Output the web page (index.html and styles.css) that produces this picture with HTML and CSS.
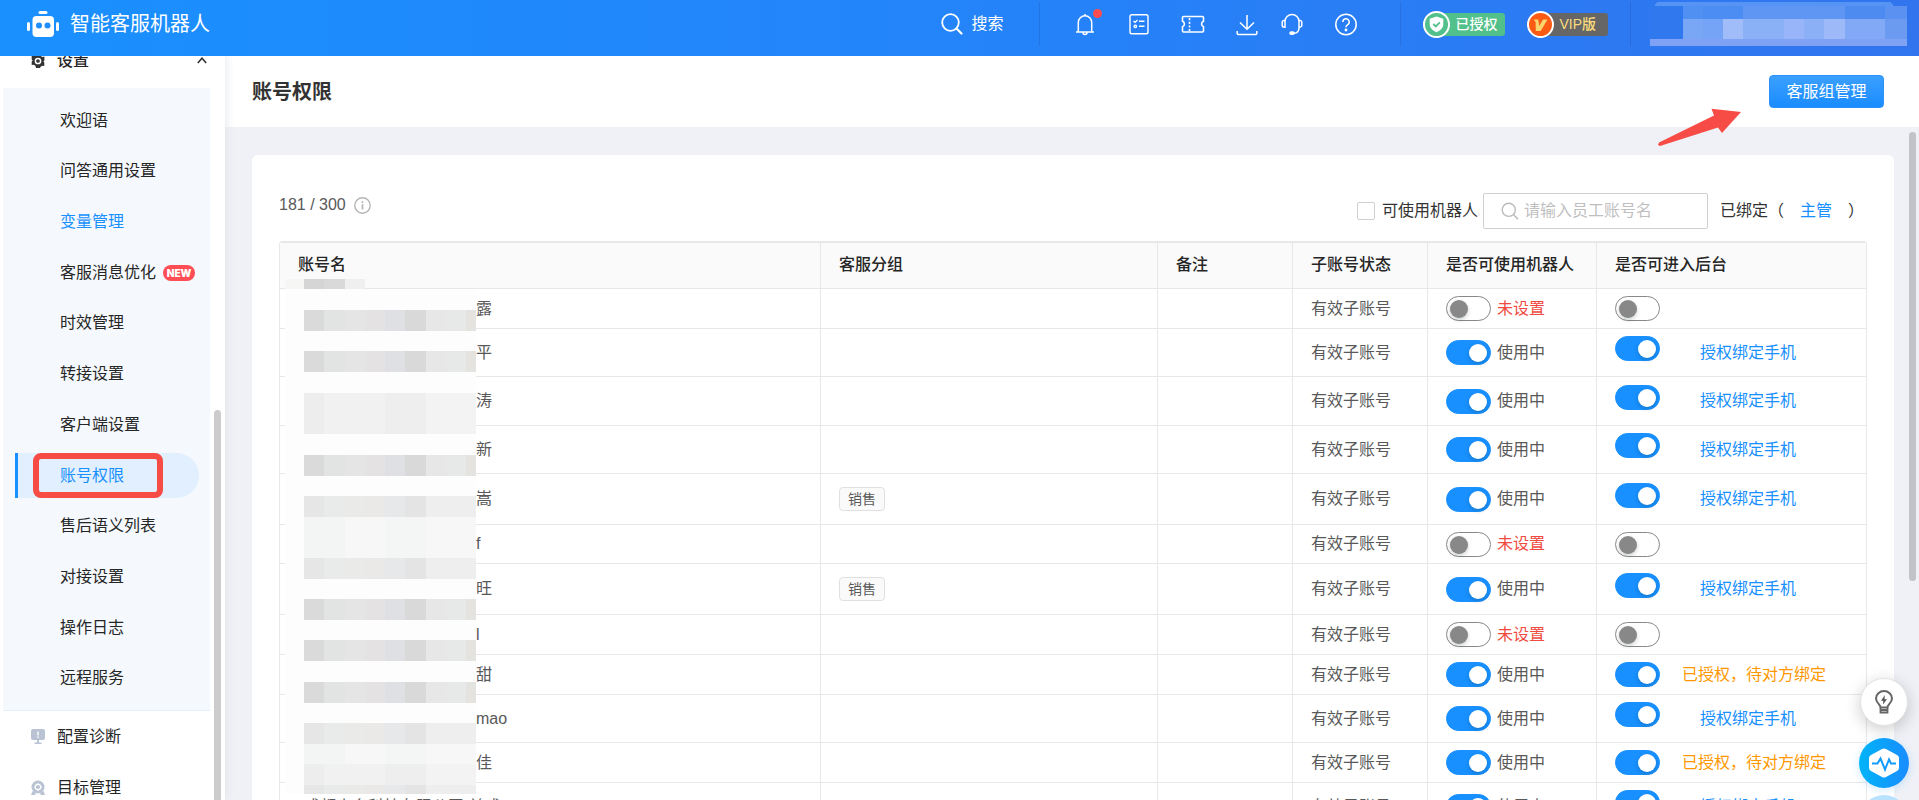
FILE: index.html
```html
<!DOCTYPE html>
<html lang="zh-CN">
<head>
<meta charset="utf-8">
<meta name="viewport" content="width=device-width, initial-scale=1">
<title>账号权限 - 智能客服机器人</title>
<link rel="stylesheet" href="styles.css">
</head>
<body>
<header class="topbar">
  <div class="brand">
    <svg width="32" height="26" viewBox="0 0 32 26" fill="#fff" aria-hidden="true"><rect x="11.500" y="0" width="9" height="3" rx="1.500"/><rect x="5.500" y="5" width="21.500" height="21" rx="4"/><rect x="0" y="11" width="3" height="9" rx="1.500"/><rect x="29" y="11" width="3" height="9" rx="1.500"/><circle cx="12" cy="14.500" r="3" fill="#1e8dff"/><circle cx="20.500" cy="14.500" r="3" fill="#1e8dff"/></svg>
    <span class="brand-name">智能客服机器人</span>
  </div>
  <button class="search" type="button">
    <svg width="22" height="22" viewBox="0 0 22 22" fill="none" stroke="#fff" stroke-width="1.800" aria-hidden="true"><circle cx="9.500" cy="9.500" r="8.300"/><path d="M15.500 15.500l5 5" stroke-width="2.200" stroke-linecap="round"/></svg>
    <span>搜索</span>
  </button>
  <div class="tools">
    <button class="tool" type="button" aria-label="通知">
      <svg width="24" height="24" viewBox="0 0 24 24" fill="none" stroke="#fff" stroke-width="1.500"><path d="M3 20h18M5.300 20v-9.500a6.700 6.700 0 0 1 13.400 0V20M12 3.800V2M10 20.500a2 2 0 0 0 4 0"/></svg>
      <i class="dot"></i>
    </button>
    <button class="tool" type="button" aria-label="任务">
      <svg width="24" height="24" viewBox="0 0 24 24" fill="none" stroke="#fff" stroke-width="1.400"><rect x="3" y="2.700" width="18" height="19" rx="1.800"/><path d="M6.500 9l1.500 1.400L10.500 8M12 9.300h5.500M12 14.300h5.500"/><circle cx="8.300" cy="14.300" r="1.200"/></svg>
    </button>
    <button class="tool tool-ticket" type="button" aria-label="卡券">
      <svg width="24" height="24" viewBox="0 0 24 24" fill="none" stroke="#fff" stroke-width="1.600"><path d="M1.500 5.500a1 1 0 0 1 1-1h19a1 1 0 0 1 1 1v3.700a3 3 0 0 0 0 5.600v4.200a1 1 0 0 1-1 1h-19a1 1 0 0 1-1-1v-4.200a3 3 0 0 0 0-5.600z"/><path d="M8.500 6v13" stroke-dasharray="2.200 1.500"/></svg>
    </button>
    <button class="tool" type="button" aria-label="下载">
      <svg width="24" height="24" viewBox="0 0 24 24" fill="none" stroke="#fff" stroke-width="1.500"><path d="M12 3v14M5 10.500l7 6.800 7-6.800M2.200 19v2.500a1 1 0 0 0 1 1h17.600a1 1 0 0 0 1-1V19"/></svg>
    </button>
    <button class="tool tool-headset" type="button" aria-label="客服">
      <svg width="24" height="24" viewBox="0 0 24 24" fill="none" stroke="#fff" stroke-width="1.500"><path d="M5 16V9.500a7 7 0 0 1 14 0V16c0 3-1.500 5-5 5.300"/><path d="M5 8.500H4A1.800 1.800 0 0 0 2.200 10.300v3A1.800 1.800 0 0 0 4 15.100h1M19 8.500h1a1.800 1.800 0 0 1 1.800 1.800v3a1.800 1.800 0 0 1-1.800 1.800h-1"/><rect x="10" y="20" width="4" height="2.200" rx="1.100" fill="#fff"/></svg>
    </button>
    <button class="tool" type="button" aria-label="帮助">
      <svg width="24" height="24" viewBox="0 0 24 24" fill="none" stroke="#fff" stroke-width="1.500"><circle cx="12" cy="12.500" r="10.200"/><path d="M8.800 10a3.200 3.200 0 1 1 4.700 2.800c-1 .600-1.500 1.100-1.500 2.400"/><circle cx="12" cy="18" r=".7" fill="#fff"/></svg>
    </button>
  </div>
  <div class="badges">
    <span class="badge badge-green">
      <svg width="27" height="27" viewBox="0 0 27 27" aria-hidden="true"><circle cx="13.500" cy="13.500" r="12.500" fill="#52c08a" stroke="#fff" stroke-width="2"/><path d="M13.500 5.500l6.800 2.200v5.800c0 3.500-3 6-6.800 7.700-3.800-1.700-6.800-4.200-6.800-7.700V7.700z" fill="#fff"/><path d="M10.300 13l2.500 2.400 4-4" fill="none" stroke="#52c08a" stroke-width="1.800"/></svg>
      <b>已授权</b>
    </span>
    <span class="badge badge-gray">
      <svg width="27" height="27" viewBox="0 0 27 27" aria-hidden="true"><circle cx="13.500" cy="13.500" r="12.500" fill="#fd5a14" stroke="#fff" stroke-width="2"/><path d="M6.500 8.500h4.800l.9 6.500 3.800-6.500h4.500l-6.800 11.500H8.800L8.600 11z" fill="#fbd46d"/></svg>
      <b>VIP版</b>
    </span>
  </div>
  <div class="account">
    <svg class="account-mask" viewBox="0 0 257 44" preserveAspectRatio="none" aria-hidden="true" shape-rendering="crispEdges">
      <path d="M5 4q0-4 5-4h228q5 0 5 4z" fill="#5593f4"/><path d="M12 4h20v33H12zM0 4h12v33H0z" fill="#3078ee"/>
      <path d="M33 4h20v13H33z" fill="#5090f3"/><path d="M53 4h40v13H53z" fill="#4b8df2"/><path d="M93 4h102v13H93z" fill="#5f96f3"/><path d="M195 4h40v13h-40z" fill="#4d8bf0"/><path d="M235 4h22v13h-22z" fill="#5b92f1"/>
      <path d="M33 17h20v20H33z" fill="#7aa6f6"/><path d="M53 17h20v20H53z" fill="#75a3f6"/><path d="M73 17h20v20H73z" fill="#a0bcf9"/><path d="M93 17h41v20H93z" fill="#8ab0f6"/><path d="M134 17h20v20h-20z" fill="#97b5f8"/><path d="M154 17h20v20h-20z" fill="#8cb0f5"/><path d="M174 17h21v20h-21z" fill="#9eb9f8"/><path d="M195 17h40v20h-40z" fill="#82a9f5"/><path d="M235 17h22v20h-22z" fill="#6b9bf1"/>
      <path d="M0 37h257v7H0z" fill="#80a2f4"/>
    </svg>
  </div>
</header>

<div class="shell">
  <nav class="sidebar" aria-label="主菜单">
    <a class="group group-open" href="#">
      <svg width="14" height="16" viewBox="0 0 14 16" aria-hidden="true"><path d="M5 1h4l.6 2 1.900 1 1.900-.5v4l-1 .9.900 1v3.600l-2-.3-1.700 1L9 15H5l-.6-2.300-1.700-1-2 .3V8.400l1-1-1-.9v-4l1.900.5 1.900-1z" fill="#333"/><circle cx="7" cy="8" r="2.600" fill="#333" stroke="#fff" stroke-width="1.500"/></svg>
      <span>设置</span>
      <svg class="chevron" width="10" height="7" viewBox="0 0 10 7" fill="none" stroke="#333" stroke-width="1.600" aria-hidden="true"><path d="M.8 6L5 1.300 9.200 6"/></svg>
    </a>
    <div class="submenu">
      <a class="item" href="#">欢迎语</a>
      <a class="item" href="#">问答通用设置</a>
      <a class="item item-blue" href="#">变量管理</a>
      <a class="item" href="#">客服消息优化<span class="new">NEW</span></a>
      <a class="item" href="#">时效管理</a>
      <a class="item" href="#">转接设置</a>
      <a class="item" href="#">客户端设置</a>
      <a class="item item-active" href="#" aria-current="page">账号权限<i class="marker"></i></a>
      <a class="item" href="#">售后语义列表</a>
      <a class="item" href="#">对接设置</a>
      <a class="item" href="#">操作日志</a>
      <a class="item" href="#">远程服务</a>
    </div>
    <a class="group" href="#">
      <svg width="14" height="15" viewBox="0 0 14 15" fill="#b9c3d3" aria-hidden="true"><rect width="14" height="11" rx="2"/><path d="M6 11h2v2.500h2.500V15h-7v-1.500H6z"/><path d="M6.300 2.500h1.400v4H6.300zM6.300 7.500h1.400v1.500H6.300z" fill="#fff"/></svg>
      <span>配置诊断</span>
    </a>
    <a class="group" href="#">
      <svg width="14" height="15" viewBox="0 0 14 15" aria-hidden="true"><circle cx="7" cy="7" r="6.500" fill="#b9c3d3"/><path d="M1.500 11L0 15h4l1-2M12.500 11L14 15h-4l-1-2" fill="#b9c3d3"/><circle cx="7" cy="7" r="2.700" fill="none" stroke="#fff" stroke-width="1.200"/><path d="M7 3v2M7 9v2M3 7h2M9 7h2" stroke="#fff"/></svg>
      <span>目标管理</span>
    </a>
    <i class="side-scroll"></i>
  </nav>

  <main class="main">
    <div class="page-head">
      <h1>账号权限</h1>
      <button class="primary" type="button">客服组管理</button>
      <svg class="arrow" width="84" height="38" viewBox="0 0 84 38" aria-hidden="true"><path d="M1 34.500L56 7.500 53.500.700 83 4 64 25 60 19.500 2 38 0 37z" fill="#f74b45"/></svg>
    </div>
    <div class="content">
      <section class="card">
        <div class="toolbar">
          <p class="count">181 / 300
            <svg width="17" height="17" viewBox="0 0 17 17" fill="none" stroke="#b5b5b5" stroke-width="1.400" aria-hidden="true"><circle cx="8.500" cy="8.500" r="7.700"/><path d="M8.500 7.300v5.200M8.500 4.300v1.600" stroke-width="1.700"/></svg>
          </p>
          <label class="check"><input type="checkbox">可使用机器人</label>
          <div class="field">
            <svg width="18" height="18" viewBox="0 0 18 18" fill="none" stroke="#bbb" stroke-width="1.400" aria-hidden="true"><circle cx="7.800" cy="7.800" r="6.600"/><path d="M12.500 12.500l4.500 4.700"/></svg>
            <input type="text" placeholder="请输入员工账号名" aria-label="员工账号名">
          </div>
          <span class="bound">已绑定（<a href="#">主管</a>）</span>
        </div>
        <div class="table-wrap">
          <table>
            <colgroup><col><col class="c-group"><col class="c-note"><col class="c-state"><col class="c-robot"><col class="c-admin"></colgroup>
            <thead>
              <tr><th>账号名</th><th>客服分组</th><th>备注</th><th>子账号状态</th><th>是否可使用机器人</th><th>是否可进入后台</th></tr>
            </thead>
            <tbody>
              <tr class="h40"><td class="name">露</td><td></td><td></td><td>有效子账号</td><td><label class="cell off"><input class="switch" type="checkbox" role="switch">未设置</label></td><td><div class="cell"><input class="switch" type="checkbox" role="switch" aria-label="进入后台"></div></td></tr>
              <tr class="h48"><td class="name">平</td><td></td><td></td><td>有效子账号</td><td><label class="cell"><input class="switch" type="checkbox" role="switch" checked>使用中</label></td><td><div class="cell auth"><input class="switch" type="checkbox" role="switch" checked aria-label="进入后台"><a href="#">授权绑定手机</a></div></td></tr>
              <tr class="h49"><td class="name">涛</td><td></td><td></td><td>有效子账号</td><td><label class="cell"><input class="switch" type="checkbox" role="switch" checked>使用中</label></td><td><div class="cell auth"><input class="switch" type="checkbox" role="switch" checked aria-label="进入后台"><a href="#">授权绑定手机</a></div></td></tr>
              <tr class="h48"><td class="name">新</td><td></td><td></td><td>有效子账号</td><td><label class="cell"><input class="switch" type="checkbox" role="switch" checked>使用中</label></td><td><div class="cell auth"><input class="switch" type="checkbox" role="switch" checked aria-label="进入后台"><a href="#">授权绑定手机</a></div></td></tr>
              <tr class="h51"><td class="name">嵩</td><td><span class="tag">销售</span></td><td></td><td>有效子账号</td><td><label class="cell"><input class="switch" type="checkbox" role="switch" checked>使用中</label></td><td><div class="cell auth"><input class="switch" type="checkbox" role="switch" checked aria-label="进入后台"><a href="#">授权绑定手机</a></div></td></tr>
              <tr class="h39"><td class="name">f</td><td></td><td></td><td>有效子账号</td><td><label class="cell off"><input class="switch" type="checkbox" role="switch">未设置</label></td><td><div class="cell"><input class="switch" type="checkbox" role="switch" aria-label="进入后台"></div></td></tr>
              <tr class="h51"><td class="name">旺</td><td><span class="tag">销售</span></td><td></td><td>有效子账号</td><td><label class="cell"><input class="switch" type="checkbox" role="switch" checked>使用中</label></td><td><div class="cell auth"><input class="switch" type="checkbox" role="switch" checked aria-label="进入后台"><a href="#">授权绑定手机</a></div></td></tr>
              <tr class="h40"><td class="name">l</td><td></td><td></td><td>有效子账号</td><td><label class="cell off"><input class="switch" type="checkbox" role="switch">未设置</label></td><td><div class="cell"><input class="switch" type="checkbox" role="switch" aria-label="进入后台"></div></td></tr>
              <tr class="h40"><td class="name">甜</td><td></td><td></td><td>有效子账号</td><td><label class="cell"><input class="switch" type="checkbox" role="switch" checked>使用中</label></td><td><div class="cell"><input class="switch" type="checkbox" role="switch" checked aria-label="进入后台"><span class="wait">已授权，待对方绑定</span></div></td></tr>
              <tr class="h48"><td class="name">mao</td><td></td><td></td><td>有效子账号</td><td><label class="cell"><input class="switch" type="checkbox" role="switch" checked>使用中</label></td><td><div class="cell auth"><input class="switch" type="checkbox" role="switch" checked aria-label="进入后台"><a href="#">授权绑定手机</a></div></td></tr>
              <tr class="h40"><td class="name">佳</td><td></td><td></td><td>有效子账号</td><td><label class="cell"><input class="switch" type="checkbox" role="switch" checked>使用中</label></td><td><div class="cell"><input class="switch" type="checkbox" role="switch" checked aria-label="进入后台"><span class="wait">已授权，待对方绑定</span></div></td></tr>
              <tr class="h48"><td class="name-full">成都小多科技有限公司:兰成</td><td></td><td></td><td>有效子账号</td><td><label class="cell"><input class="switch" type="checkbox" role="switch" checked>使用中</label></td><td><div class="cell auth"><input class="switch" type="checkbox" role="switch" checked aria-label="进入后台"><a href="#">授权绑定手机</a></div></td></tr>
            </tbody>
          </table>
          <svg class="name-mask" width="191" height="515" viewBox="0 0 191 515" aria-hidden="true" shape-rendering="crispEdges">
            <defs>
              <g id="dark"><path d="M19 0h20v21H19z" fill="#dadada"/><path d="M39 0h21v21H39z" fill="#e1e4e3"/><path d="M60 0h20v21H60z" fill="#e5e5e5"/><path d="M80 0h20v21H80z" fill="#e4e2e3"/><path d="M100 0h20v21h-20z" fill="#dfe0e3"/><path d="M120 0h21v21h-21z" fill="#d9d9d9"/><path d="M141 0h20v21h-20z" fill="#e7e7e7"/><path d="M161 0h20v21h-20z" fill="#e6e9e8"/><path d="M181 0h10v21h-10z" fill="#e4e3e0"/></g>
              <g id="mid"><path d="M19 0h20v21H19z" fill="#e6e6e6"/><path d="M39 0h21v21H39z" fill="#e9ebea"/><path d="M60 0h20v21H60z" fill="#eaeae8"/><path d="M80 0h20v21H80z" fill="#ebe9e8"/><path d="M100 0h20v21h-20z" fill="#e7e8e9"/><path d="M120 0h21v21h-21z" fill="#e4e4e4"/><path d="M141 0h50v21h-50z" fill="#eee"/></g>
              <g id="pale"><path d="M19 0h41v21H19z" fill="#f3f5f4"/><path d="M60 0h40v21H60z" fill="#f7f7f7"/><path d="M100 0h41v21h-41z" fill="#f4f5f5"/><path d="M141 0h50v21h-50z" fill="#f7f7f7"/></g>
              <g id="light"><path d="M19 0h20v21H19z" fill="#ededed"/><path d="M39 0h61v21H39z" fill="#f0f1f0"/><path d="M100 0h41v21h-41z" fill="#eee"/><path d="M141 0h50v21h-50z" fill="#f3f3f3"/></g>
            </defs>
            <path d="M0 10h191v505H0z" fill="#fdfdfd"/>
            <path d="M0 0h19v10H0z" fill="#f6f6f5"/><path d="M19 0h20v10H19z" fill="#d5d5d5"/><path d="M39 0h21v10H39z" fill="#d9d9d9"/><path d="M60 0h20v10H60z" fill="#efefef"/>
            <use href="#dark" y="31"/><use href="#dark" y="72"/><use href="#light" y="114"/><use href="#light" y="134"/><use href="#dark" y="176"/><use href="#mid" y="217"/><use href="#pale" y="238"/><use href="#pale" y="259"/><use href="#mid" y="279"/><use href="#dark" y="320"/><use href="#dark" y="361"/><use href="#dark" y="403"/><use href="#mid" y="444"/><use href="#pale" y="465"/><use href="#light" y="485"/><use href="#mid" y="506"/>
          </svg>
        </div>
      </section>
      <i class="page-scroll"></i>
    </div>
  </main>
</div>

<div class="floats">
  <button class="float float-tip" type="button" aria-label="提示">
    <svg width="20" height="24" viewBox="0 0 20 24" fill="none" stroke="#666" stroke-width="2" aria-hidden="true"><path d="M6.500 17.500c0-3-4.500-4.500-4.500-9a8 7.500 0 0 1 16 0c0 4.500-4.500 6-4.500 9z"/><path d="M6.500 18v4.500h7V18M6.500 20h7" stroke-width="1.800"/><path d="M10.800 5L7 10.800h2.300L9 14.500l4-5.300h-2.500z" fill="#555" stroke="none"/></svg>
  </button>
  <button class="float float-pulse" type="button" aria-label="诊断">
    <svg width="32" height="32" viewBox="0 0 32 32" aria-hidden="true"><path d="M16 1.500q1 0 2 .6l11 6q2 1 2 3v10q0 2-2 3l-11 6q-2 1-4 0l-11-6q-2-1-2-3v-10q0-2 2-3l11-6q1-.6 2-.6z" fill="#fff"/><path d="M4 16.500h5.500l3-5 4.500 11 4-10 2 4H28" fill="none" stroke="#159cff" stroke-width="2"/></svg>
  </button>
  <i class="float float-more"></i>
</div>
</body>
</html>
```
FILE: styles.css
```css
* { box-sizing: border-box; }
body {
  margin: 0;
  height: 100vh;
  overflow: hidden;
  display: flex;
  flex-direction: column;
  font: 16px/24px "Liberation Sans", "Noto Sans CJK SC", sans-serif;
  color: #333;
  background: #eff1f6;
}
a { color: #1890ff; text-decoration: none; }
button, input { font: inherit; }
button { border: 0; padding: 0; background: none; color: inherit; cursor: pointer; }
svg { flex: none; display: block; }

/* top bar */
.topbar {
  flex: none;
  z-index: 2;
  height: 56px;
  padding: 0 12px 8px 27px;
  display: flex;
  align-items: center;
  color: #fff;
  background: linear-gradient(90deg, #1a90ff, #2681f8 60%, #3174ee);
}
.brand { flex: 1; display: flex; align-items: center; gap: 11px; }
.brand-name { font-size: 20px; }
.search { display: flex; align-items: center; gap: 8px; padding-right: 36px; }
.tools {
  height: 44px;
  display: flex;
  align-items: center;
  gap: 30px;
  padding: 0 42px 0 33px;
  border-left: 1px solid #2274e4;
  border-right: 1px solid #2a70e0;
}
.tool { position: relative; }
.tool-headset { margin-left: -9px; }
.dot { position: absolute; top: -3px; right: -5px; width: 9px; height: 9px; border-radius: 50%; background: #ff4d4f; }
.badges { height: 44px; display: flex; align-items: center; gap: 22px; padding: 0 22px; border-right: 1px solid #2a6cdc; }
.badge { display: flex; align-items: center; gap: 5px; height: 23px; border-radius: 14px 4px 4px 14px; }
.badge b { font-size: 14px; font-weight: 500; line-height: 23px; }
.badge-green { background: #52c08a; }
.badge-green b { padding-right: 8px; }
.badge-gray { background: #666; color: #fbdb7c; }
.badge-gray b { padding-right: 12px; }
.account { width: 276px; padding-left: 19px; }
.account-mask { width: 100%; height: 44px; }

/* frame */
.shell { flex: 1; min-height: 0; display: flex; }
.sidebar {
  position: relative;
  z-index: 1;
  flex: none;
  width: 225px;
  padding-right: 15px;
  background: #fff;
  box-shadow: 0 0 10px #dfe2e8;
}
.group { display: flex; align-items: center; gap: 12px; height: 51px; padding-left: 31px; color: #262626; }
.group-open { margin-top: -21px; font-weight: 500; }
.chevron { margin-left: auto; margin-right: 3px; }
.submenu {
  min-height: 623px;
  margin: 2px 0 0 3px;
  padding: 10px 11px 9px 12px;
  display: flex;
  flex-direction: column;
  justify-content: space-between;
  background: #f5f9fd;
  border-bottom: 1px solid #e3effb;
}
.item {
  position: relative;
  display: flex;
  align-items: center;
  gap: 7px;
  height: 45px;
  padding-left: 42px;
  border-left: 3px solid transparent;
  color: #262626;
}
.item-blue { color: #1890ff; }
.item-active { color: #1890ff; border-color: #1890ff; background: #e1effe; border-radius: 0 23px 23px 0; }
.marker { position: absolute; inset: 0 36px 0 15px; border: 6px solid #f74b45; border-radius: 8px; }
.new { flex: none; width: 32px; border-radius: 8px; background: #ff4d55; color: #fff; font: 900 10px/16px Inter, sans-serif; text-align: center; }
.side-scroll { position: absolute; top: 354px; bottom: 0; right: 4px; width: 7px; border-radius: 4px 4px 0 0; background: #ccc; }

/* page */
.main { flex: 1; min-width: 0; display: flex; flex-direction: column; }
.page-head {
  position: relative;
  flex: none;
  height: 71px;
  padding: 0 35px 0 27px;
  display: flex;
  align-items: center;
  justify-content: space-between;
  background: #fff;
}
h1 { margin: 0; font-size: 20px; line-height: 28px; font-weight: 700; }
.primary { width: 115px; height: 33px; border: 1px solid #2a92fa; border-radius: 4px; color: #fff; background: linear-gradient(#3ba0ff, #1a8cff); }
.arrow { position: absolute; z-index: 1; right: 177px; top: 52px; }
.content { position: relative; flex: 1; min-height: 0; overflow: hidden; padding: 28px 25px 0 27px; }
.page-scroll { position: absolute; right: 3px; top: 5px; width: 7px; height: 449px; border-radius: 4px; background: #c1c3c6; }
.card { min-height: 100%; padding: 38px 27px 0; border-radius: 6px; background: #fff; }
.toolbar { display: flex; align-items: center; height: 36px; margin-bottom: 12px; padding-right: 3px; }
.count { display: flex; align-items: center; gap: 8px; margin: 0 auto 12px 0; color: #595959; }
.check { display: flex; align-items: center; gap: 7px; margin-right: 5px; }
.check input { appearance: none; width: 18px; height: 18px; margin: 0; border: 1px solid #d0d0d0; border-radius: 2px; background: #fff; }
.field { display: flex; align-items: center; gap: 5px; width: 225px; height: 36px; margin-right: 12px; padding-left: 17px; border: 1px solid #d0d0d0; border-radius: 2px; }
.field input { flex: 1; min-width: 0; padding: 0; border: 0; outline: 0; background: none; }
.field input::placeholder { color: #bfbfbf; }
.bound a { margin: 0 16px; }

/* table */
.table-wrap { position: relative; }
table { width: 100%; table-layout: fixed; border-collapse: separate; border-spacing: 0; border: solid #e8e8e8; border-width: 2px 0 0 1px; border-radius: 4px 4px 0 0; }
.c-group { width: 337px; }
.c-note { width: 135px; }
.c-state { width: 135px; }
.c-robot { width: 169px; }
.c-admin { width: 270px; }
th, td { padding: 0 0 0 18px; border: solid #e8e8e8; border-width: 0 1px 1px 0; text-align: left; white-space: nowrap; }
th { height: 46px; padding-bottom: 2px; background: #fafafa; font-weight: 500; color: #262626; }
td { color: #595959; }
.name { padding-left: 196px; }
.name-full { padding-left: 24px; }
.h39 { height: 39px; }
.h40 { height: 40px; }
.h48 { height: 48px; }
.h49 { height: 49px; }
.h51 { height: 51px; }
.tag { display: block; width: 46px; height: 24px; border: 1px solid #e0e0e0; border-radius: 4px; background: #fafafa; font-size: 14px; line-height: 22px; text-align: center; }
.cell { display: flex; align-items: center; gap: 6px; }
.off { color: #f04b42; }
.auth .switch { margin-bottom: 8px; }
.auth a { margin-left: 34px; }
.wait { margin-left: 16px; color: #ff9800; }
.switch {
  appearance: none;
  flex: none;
  width: 45px;
  height: 25px;
  margin: 0;
  padding: 3px;
  border: 1px solid #888;
  border-radius: 13px;
  background: #fff;
}
.switch::before { content: ""; display: block; width: 18px; height: 18px; border-radius: 50%; background: #888; box-shadow: 0 2px 4px rgba(0, 35, 11, .2); }
.switch:checked { border-color: #1890ff; background: #1890ff; }
.switch:checked::before { margin-left: auto; background: #fff; }
.name-mask { position: absolute; left: 6px; top: 38px; }

/* floating helpers */
.floats { position: fixed; z-index: 3; right: 10px; top: 678px; display: flex; flex-direction: column; align-items: center; }
.float { display: flex; align-items: center; justify-content: center; width: 50px; height: 50px; border-radius: 50%; }
.float-tip { width: 48px; height: 48px; margin-bottom: 12px; border: 1px solid #e2e2e2; background: #fff; box-shadow: 0 4px 16px rgba(0, 0, 0, .2); }
.float-pulse { margin-bottom: 7px; background: linear-gradient(90deg, #00b4f8, #1a8cff); box-shadow: 0 2px 8px rgba(24, 144, 255, .2); }
.float-more { background: #b8e2fd; }
```
